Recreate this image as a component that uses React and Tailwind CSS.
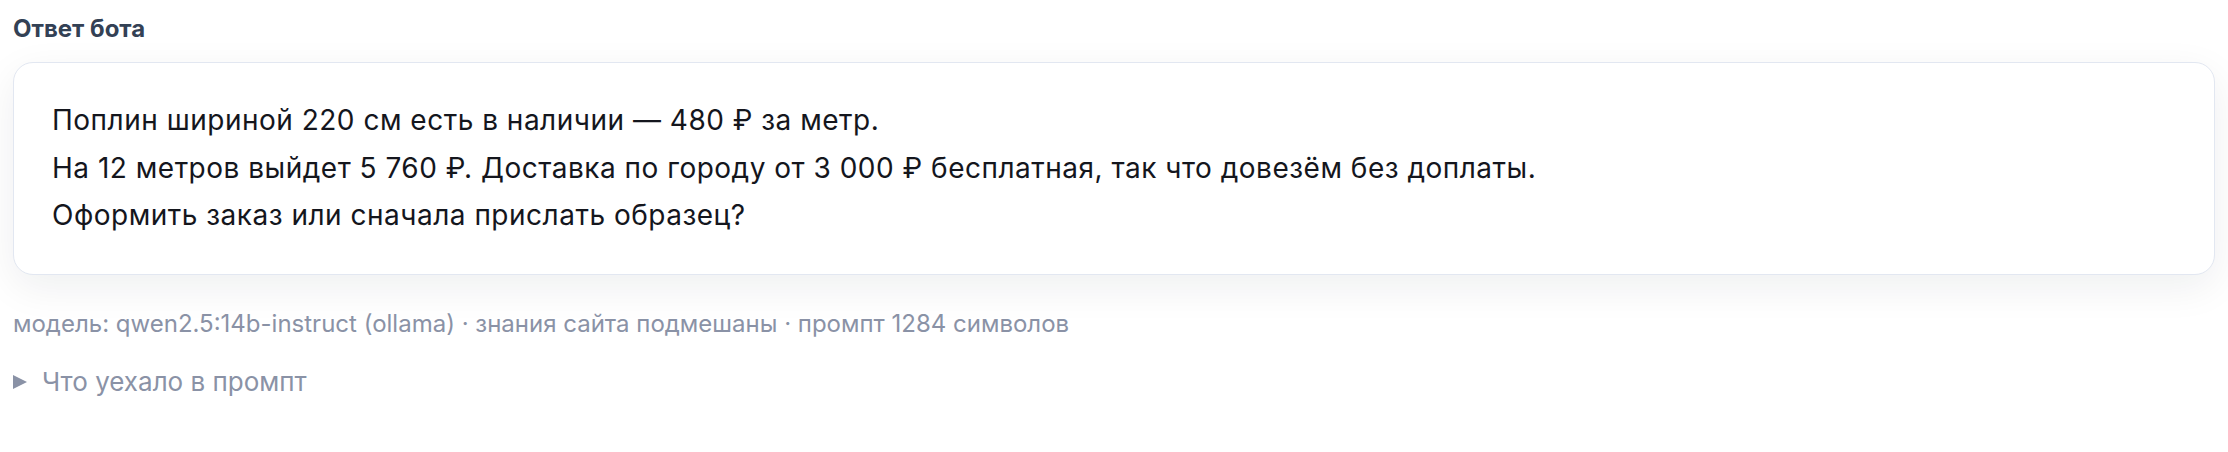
import { useState } from "react";

const reply = [
  "Поплин шириной 220 см есть в наличии — 480 ₽ за метр.",
  "На 12 метров выйдет 5 760 ₽. Доставка по городу от 3 000 ₽ бесплатная, так что довезём без доплаты.",
  "Оформить заказ или сначала прислать образец?"
];

const meta = "модель: qwen2.5:14b-instruct (ollama) · знания сайта подмешаны · промпт 1284 символов";

const BotReply = () => {
  const [open, setOpen] = useState(false);

  return (
    <div className="min-h-screen bg-white px-[13px] pt-[14px] font-['Inter',sans-serif]">
      <h3 className="text-[24px] font-bold leading-[30px] text-[#334155]">Ответ бота</h3>

      <div className="mt-[18px] rounded-[20px] border border-[#e2e7f1] bg-white px-[38px] py-[34px] shadow-[0_12px_40px_rgba(15,23,42,0.07)]">
        {reply.map((line) => (
          <p key={line} className="text-[28px] leading-[47.6px] tracking-[0.5px] text-[#14161d]">
            {line}
          </p>
        ))}
      </div>

      <div className="mt-[33px] text-[24px] leading-[32px] text-[#8a92a6]">{meta}</div>

      <button
        type="button"
        onClick={() => setOpen((v) => !v)}
        className="mt-[25px] flex items-center gap-[15px] text-[26px] leading-[34px] text-[#8a92a6]"
      >
        <svg width="14" height="14" viewBox="0 0 14 14" className={open ? "rotate-90" : ""}>
          <path d="M0 0 L14 7 L0 14 Z" fill="#8a92a6" />
        </svg>
        Что уехало в промпт
      </button>
    </div>
  );
};

export default function App() {
  return <BotReply />;
}
